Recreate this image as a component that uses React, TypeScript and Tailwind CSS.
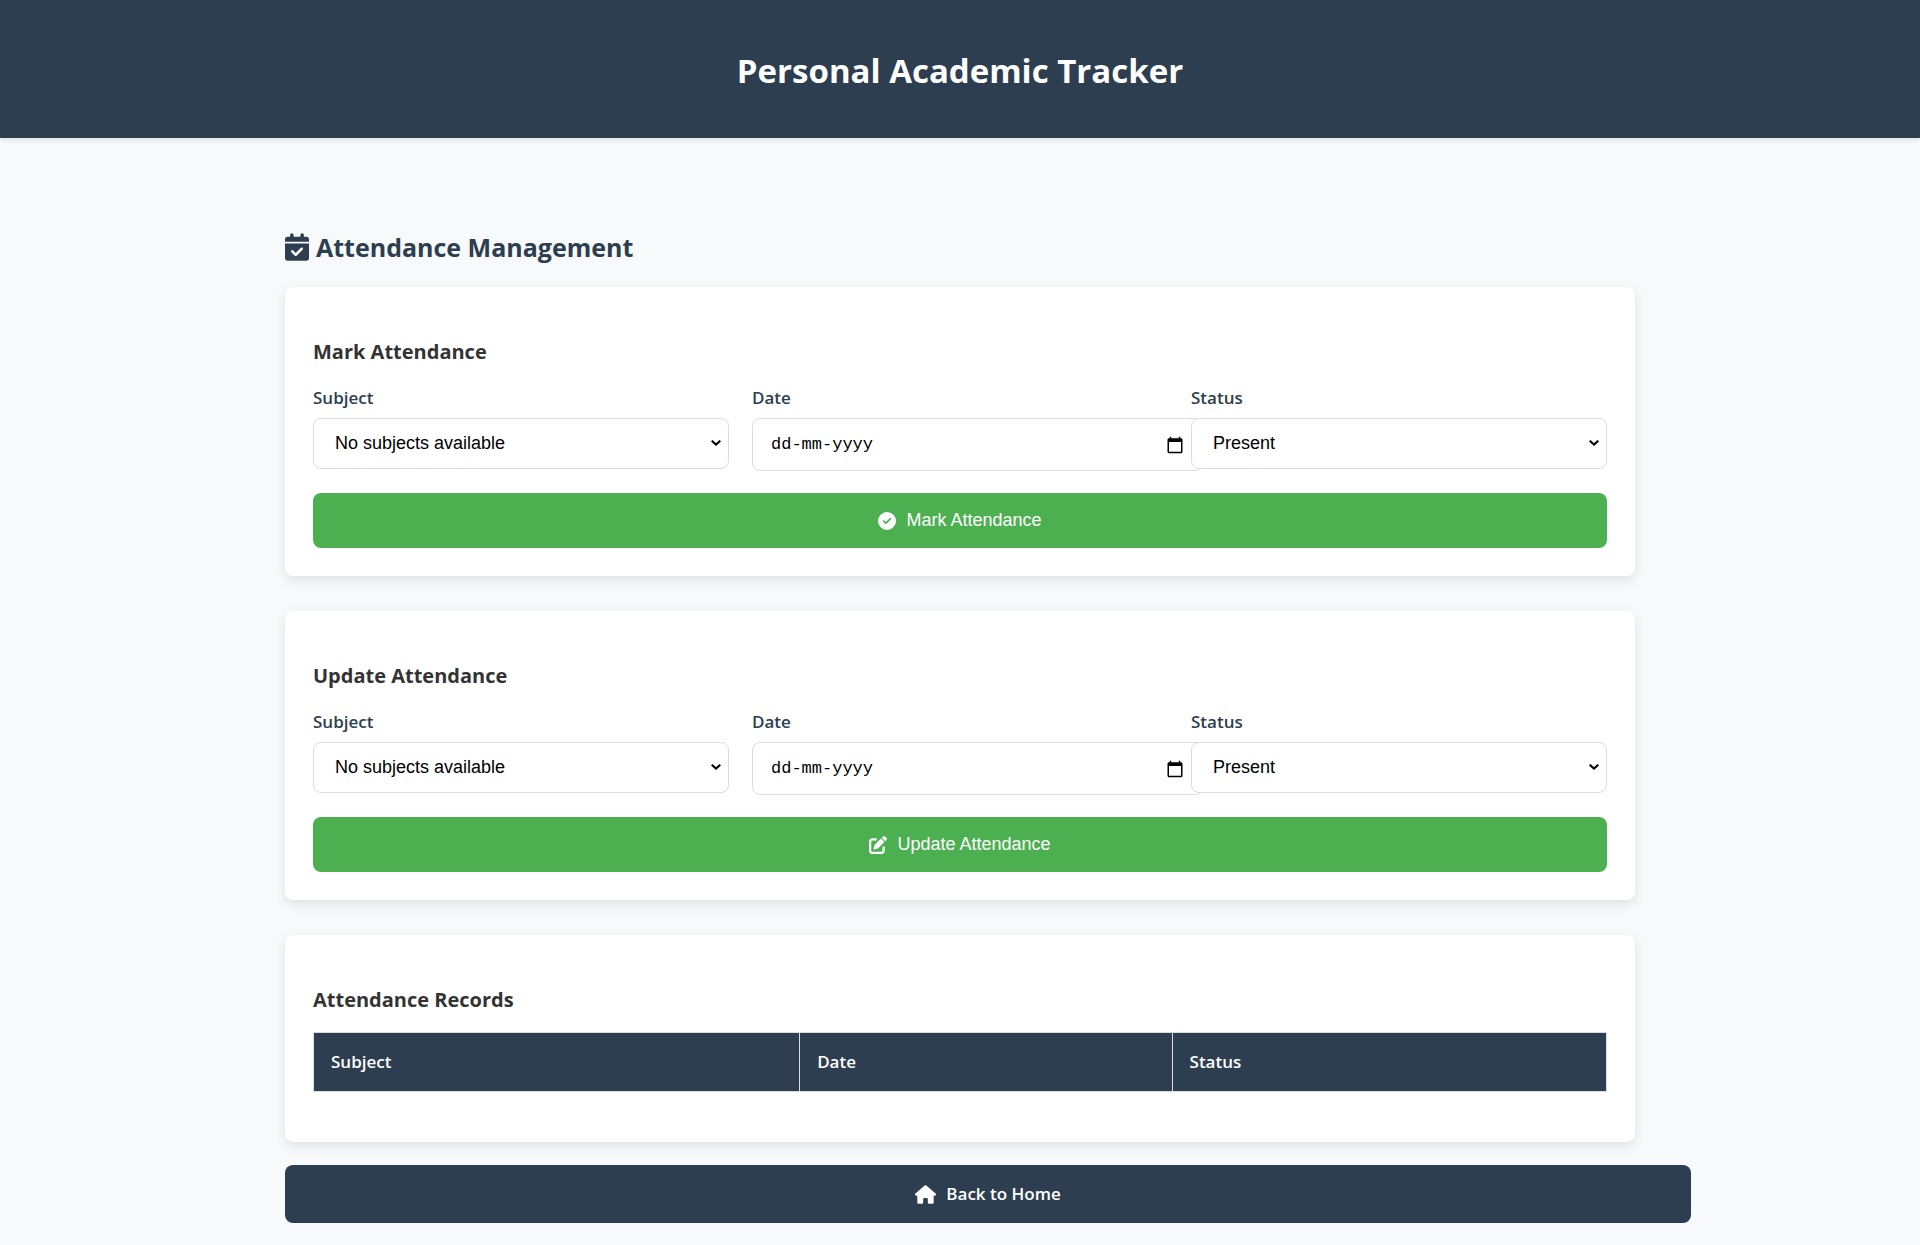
import React, { useId } from "react";
import { FaCalendarCheck, FaCircleCheck, FaHouse, FaPenToSquare } from "react-icons/fa6";

const labelClass = "mb-[6px] block text-[17px] leading-7 font-semibold text-[#2c3e50]";

function CalendarGlyph() {
  return (
    <svg viewBox="0 0 24 24" className="size-[18px]" fill="currentColor" aria-hidden="true">
      <path d="M20 3h-1V1h-2v2H7V1H5v2H4c-1.1 0-2 .9-2 2v16c0 1.1.9 2 2 2h16c1.1 0 2-.9 2-2V5c0-1.1-.9-2-2-2zm0 18H4V8h16v13z" />
    </svg>
  );
}

function ChevronGlyph() {
  return (
    <svg
      viewBox="0 0 10 6"
      className="pointer-events-none absolute top-[22px] right-2 h-[6px] w-[10px]"
      fill="none"
      stroke="black"
      strokeWidth="2"
      aria-hidden="true"
    >
      <path d="M0.7 0.7L5 4.6L9.3 0.7" />
    </svg>
  );
}

function SelectField({ label, options }: { label: string; options: string[] }) {
  const id = useId();
  return (
    <div className="relative z-10 min-w-0">
      <label htmlFor={id} className={labelClass}>
        {label}
      </label>
      <div className="relative">
        <select
          id={id}
          className="block h-[51px] w-full appearance-none rounded-lg border border-[#dddddd] bg-white px-[21px] font-['Liberation_Sans',sans-serif] text-[18px] text-black"
        >
          {options.map((o) => (
            <option key={o}>{o}</option>
          ))}
        </select>
        <ChevronGlyph />
      </div>
    </div>
  );
}

function DateField({ label }: { label: string }) {
  const id = useId();
  return (
    <div className="min-w-0">
      <label htmlFor={id} className={labelClass}>
        {label}
      </label>
      <div className="relative -mr-9">
        <input
          id={id}
          type="text"
          placeholder="dd-mm-yyyy"
          className="block h-[53px] w-full rounded-lg border border-[#dddddd] bg-white px-[18px] font-['Liberation_Mono',monospace] text-[17px] text-black placeholder:text-black"
        />
        <button
          type="button"
          aria-label="Open calendar"
          className="absolute inset-y-0 right-5 flex items-center text-black"
        >
          <CalendarGlyph />
        </button>
      </div>
    </div>
  );
}

function Card({ title, children }: { title: string; children: React.ReactNode }) {
  return (
    <section className="rounded-lg bg-white px-7 pt-[49px] pb-7 shadow-[0_4px_12px_rgba(0,0,0,0.1)]">
      <h3 className="mb-4 text-[20px] leading-8 font-bold text-[#333333]">{title}</h3>
      {children}
    </section>
  );
}

function AttendanceForm({ title, icon }: { title: string; icon: React.ReactNode }) {
  return (
    <Card title={title}>
      <form onSubmit={(e) => e.preventDefault()}>
        <div className="grid grid-cols-3 gap-[23px]">
          <SelectField label="Subject" options={["No subjects available"]} />
          <DateField label="Date" />
          <SelectField label="Status" options={["Present", "Absent"]} />
        </div>
        <button
          type="submit"
          className="mt-[22px] flex h-[55px] w-full items-center justify-center gap-[10px] rounded-lg bg-[#4caf50] font-['Liberation_Sans',sans-serif] text-[18px] text-white"
        >
          {icon}
          {title}
        </button>
      </form>
    </Card>
  );
}

const columns = [
  { name: "Subject", width: "w-[37.6%]" },
  { name: "Date", width: "w-[28.8%]" },
  { name: "Status", width: "w-[33.6%]" },
];

export default function App() {
  return (
    <div className="min-h-screen bg-[#f8f9fb] font-['Open_Sans','Noto_Sans',sans-serif]">
      <header className="bg-[#2c3e50] px-6 pt-[50px] pb-[46px] text-center shadow-[0_2px_5px_rgba(0,0,0,0.1)]">
        <h1 className="text-[33px] leading-[42px] font-bold text-white">Personal Academic Tracker</h1>
      </header>
      <main className="mx-auto max-w-[1406px] px-7 pt-[88px] pb-[22px]">
        <h2 className="mb-[19px] flex items-center gap-[7px] text-[25px] leading-[42px] font-bold text-[#2c3e50]">
          <FaCalendarCheck className="h-[28px] w-[24px]" />
          Attendance Management
        </h2>
        <div className="flex flex-col gap-[35px]">
          <AttendanceForm title="Mark Attendance" icon={<FaCircleCheck className="size-[18px]" />} />
          <AttendanceForm title="Update Attendance" icon={<FaPenToSquare className="size-[18px]" />} />
          <Card title="Attendance Records">
            <table className="mb-[22px] w-full border-collapse text-left text-[17px] leading-7 text-white">
              <thead>
                <tr className="bg-[#2c3e50]">
                  {columns.map((c) => (
                    <th
                      key={c.name}
                      scope="col"
                      className={`${c.width} border border-[#dddddd] px-[17px] py-[15px] font-semibold`}
                    >
                      {c.name}
                    </th>
                  ))}
                </tr>
              </thead>
            </table>
          </Card>
        </div>
        <a
          href="#home"
          className="mt-[23px] -mr-14 flex h-[58px] items-center justify-center gap-[10px] rounded-lg bg-[#2c3e50] text-[17px] font-semibold text-white"
        >
          <FaHouse className="h-[19px] w-[21px]" />
          Back to Home
        </a>
      </main>
    </div>
  );
}
